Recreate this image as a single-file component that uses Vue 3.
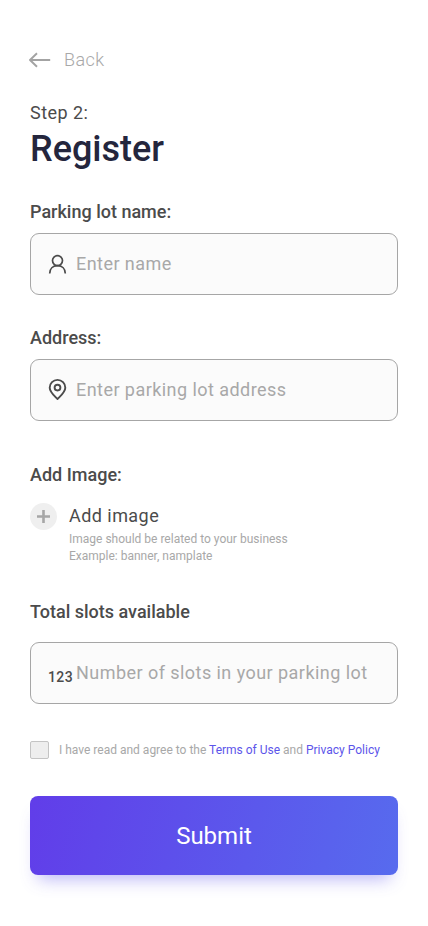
<script setup>
import { ref } from 'vue'

const name = ref('')
const address = ref('')
const slots = ref('')
const agreed = ref(false)
</script>

<template>
  <main class="screen">
    <button class="back" type="button">
      <svg width="22" height="16" viewBox="0 0 22 16" fill="none" stroke="#a3a3a3" stroke-width="1.9">
        <path d="M21.2 8H1M8 1.2L1 8l7 6.8" stroke-linejoin="round" />
      </svg>
      <span>Back</span>
    </button>

    <header class="heading">
      <p class="step">Step 2:</p>
      <h1>Register</h1>
    </header>

    <form @submit.prevent>
      <section class="group name">
        <label for="name">Parking lot name:</label>
        <div class="field">
          <svg class="icon" width="20" height="24" viewBox="0 0 20 24" fill="none" stroke="#4b4b4b" stroke-width="1.7">
            <circle cx="9.5" cy="8.6" r="5" />
            <path d="M1.7 21.4c0-4.7 3.2-7.8 7.8-7.8s7.8 3.1 7.8 7.8" />
          </svg>
          <input id="name" v-model="name" type="text" placeholder="Enter name" />
        </div>
      </section>

      <section class="group address">
        <label for="address">Address:</label>
        <div class="field">
          <svg class="icon" width="20" height="24" viewBox="0 0 20 24" fill="none" stroke="#4b4b4b" stroke-width="1.9" stroke-linejoin="round">
            <path d="M9.5 21.1C6.5 18 1.7 14 1.7 9.7a7.8 7.8 0 0 1 15.6 0c0 4.3-4.8 8.3-7.8 11.4z" />
            <circle cx="9.5" cy="9.6" r="2.9" />
          </svg>
          <input id="address" v-model="address" type="text" placeholder="Enter parking lot address" />
        </div>
      </section>

      <section class="group image">
        <h2>Add Image:</h2>
        <div class="upload">
          <button class="plus" type="button" aria-label="Add image">
            <svg width="13" height="13" viewBox="0 0 13 13" stroke="#a6a6a6" stroke-width="2.6">
              <path d="M6.5 0v13M0 6.5h13" />
            </svg>
          </button>
          <div>
            <p class="upload-title">Add image</p>
            <p class="hint">Image should be related to your business<br />Example: banner, namplate</p>
          </div>
        </div>
      </section>

      <section class="group total">
        <label for="slots">Total slots available</label>
        <div class="field">
          <span class="digits">123</span>
          <input id="slots" v-model="slots" type="text" placeholder="Number of slots in your parking lot" />
        </div>
      </section>

      <div class="terms">
        <input v-model="agreed" type="checkbox" aria-label="Agree" />
        <p>I have read and agree to the <a>Terms of Use</a> and <a>Privacy Policy</a></p>
      </div>

      <button class="submit" type="submit">Submit</button>
    </form>
  </main>
</template>

<style>
body {
  background: #fff;
}
</style>

<style scoped>
.screen {
  box-sizing: border-box;
  width: 428px;
  height: 926px;
  padding: 49px 30px 0;
  overflow: hidden;
  background: #fff;
  color: #4b4b4b;
  font-family: Roboto, sans-serif;
  font-size: 18px;
  line-height: 21px;
}
p, h1, h2 {
  margin: 0;
}
button {
  padding: 0;
  border: 0;
  background: none;
  font-family: inherit;
}
.back {
  display: flex;
  align-items: center;
  gap: 13px;
  height: 22px;
  margin-left: -1px;
  color: #a8a8a8;
  font-size: 18px;
  font-weight: 300;
  line-height: 21px;
  letter-spacing: 0.45px;
}
.back span {
  padding-bottom: 2px;
}
.heading {
  margin-top: 31px;
}
.step {
  letter-spacing: 0.45px;
}
h1 {
  margin-top: 5px;
  color: #24263d;
  font-size: 36px;
  font-weight: 500;
  line-height: 42px;
}
.group {
  display: flex;
  flex-direction: column;
}
.name {
  margin-top: 31px;
}
.address {
  margin-top: 32px;
}
.image {
  margin-top: 43px;
}
.total {
  margin-top: 36px;
}
label, h2 {
  font-size: 18px;
  font-weight: 500;
  line-height: 21px;
}
.field {
  box-sizing: border-box;
  display: flex;
  align-items: center;
  height: 62px;
  margin-top: 11px;
  padding: 0 17px;
  border: 1px solid #a6a6a6;
  border-radius: 9px;
  background: #fbfbfb;
}
.total .field {
  margin-top: 20px;
}
.icon {
  flex: none;
  margin-right: 8px;
}
.digits {
  flex: none;
  width: 28px;
  padding-top: 8px;
  font-size: 14px;
  font-weight: 500;
  line-height: 18px;
  letter-spacing: 0.4px;
}
.field input {
  flex: 1;
  min-width: 0;
  height: 22px;
  padding: 0 0 2px;
  border: 0;
  outline: 0;
  background: transparent;
  color: #4b4b4b;
  font-family: inherit;
  font-size: 18px;
  letter-spacing: 0.45px;
}
.field input::placeholder {
  color: #a8a8a8;
  opacity: 1;
}
.upload {
  display: flex;
  align-items: flex-start;
  gap: 12px;
  margin-top: 18px;
}
.plus {
  display: flex;
  align-items: center;
  justify-content: center;
  width: 27px;
  height: 27px;
  border-radius: 50%;
  background: #efefef;
}
.upload-title {
  margin-top: 2px;
  letter-spacing: 0.45px;
}
.hint {
  margin-top: 5px;
  color: #a8a8a8;
  font-size: 12px;
  line-height: 17px;
}
.terms {
  display: flex;
  align-items: center;
  gap: 10px;
  height: 18px;
  margin-top: 37px;
}
.terms input {
  appearance: none;
  flex: none;
  box-sizing: border-box;
  width: 19px;
  height: 18px;
  margin: 0;
  border: 1px solid #c4c4c4;
  border-radius: 2px;
  background: #eee;
}
.terms p {
  color: #a8a8a8;
  font-size: 12px;
  line-height: 16px;
  white-space: nowrap;
}
.terms a {
  color: #5c55ea;
}
.submit {
  position: relative;
  z-index: 0;
  display: block;
  width: 368px;
  height: 79px;
  margin-top: 37px;
  border-radius: 8px;
  background: linear-gradient(105deg, #613de9 0%, #576bee 100%);
  color: #fff;
  font-size: 24px;
  line-height: 28px;
}
/* Coloured glow beneath the button */
.submit::before {
  content: '';
  position: absolute;
  z-index: -1;
  inset: 0;
  border-radius: 8px;
  box-shadow: 0 12px 16px -8px rgba(93, 82, 235, 0.42);
}
</style>
